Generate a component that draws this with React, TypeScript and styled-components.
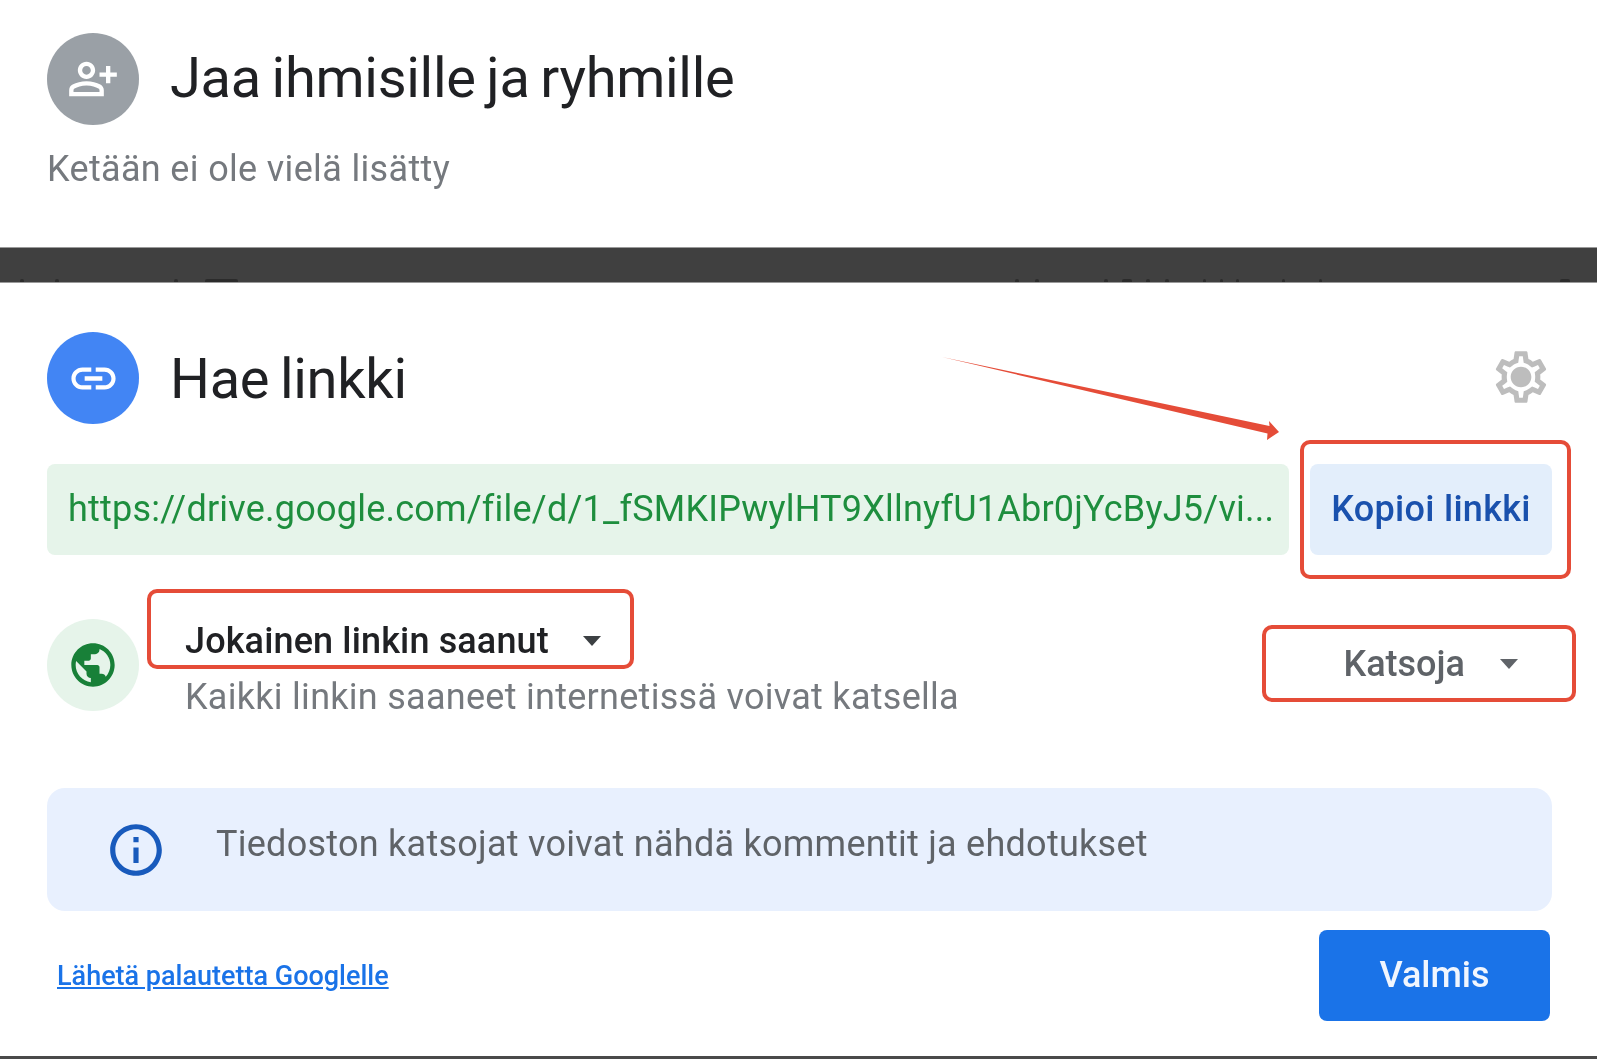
import { ReactElement, ReactNode } from 'react'
import styled, { createGlobalStyle } from 'styled-components'
import { MdInfoOutline, MdLink, MdOutlinePersonAddAlt, MdOutlineSettings, MdPublic } from 'react-icons/md'

const GlobalStyle = createGlobalStyle`
  html, body {
    margin: 0;
    padding: 0;
    background: #fff;
  }
  body {
    font-family: Roboto, "Liberation Sans", sans-serif;
  }
`

// bits of the page behind the dialog that peek over the band: gap from the previous one, width
const bandMarks = [
  [20, 4], [31, 4], [115, 4], [27, 33],
  [777, 4], [16, 4], [65, 4], [14, 10], [14, 4], [15, 4], [34, 3], [14, 3], [13, 3], [43, 3], [34, 3], [238, 10],
]

function Caret({ color }: { color: string }): ReactElement {
  return (
    <CaretIcon viewBox="0 0 18 10" aria-hidden="true">
      <polygon points="0,0 18,0 9,10" fill={color} />
    </CaretIcon>
  )
}

function CircleIcon({ bg, children }: { bg: string; children: ReactNode }): ReactElement {
  return <Circle $bg={bg}>{children}</Circle>
}

function App(): ReactElement {
  return (
    <Page>
      <GlobalStyle />

      <TopSection>
        <HeaderRow>
          <CircleIcon bg="#9aa0a6">
            <MdOutlinePersonAddAlt size={52} color="#fff" />
          </CircleIcon>
          <Title $shift={-1}>Jaa ihmisille ja ryhmille</Title>
        </HeaderRow>
        <EmptyNote>Ketään ei ole vielä lisätty</EmptyNote>
      </TopSection>

      <Band>
        {bandMarks.map(([left, width], i) => (
          <BandMark key={i} $left={left} $width={width} />
        ))}
      </Band>

      <Card>
        <HeaderRow>
          <CircleIcon bg="#4285f4">
            <MdLink size={53} color="#fff" />
          </CircleIcon>
          <Title $shift={1}>Hae linkki</Title>
          <SettingsButton>
            <MdOutlineSettings size={62} color="#bdbdbd" />
            <SettingsDot />
          </SettingsButton>
        </HeaderRow>

        <LinkRow>
          <UrlField>https://drive.google.com/file/d/1_fSMKIPwylHT9XllnyfU1Abr0jYcByJ5/vi...</UrlField>
          <CopyButton>
            Kopioi linkki
            <Callout $top={-24} $right={-19} $bottom={-24} $left={-10} />
          </CopyButton>
        </LinkRow>

        <AccessRow>
          <CircleIcon bg="#e6f4ea">
            <MdPublic size={52} color="#188038" />
          </CircleIcon>
          <AccessText>
            <AccessSelect>
              Jokainen linkin saanut
              <Caret color="#3c4043" />
              <Callout $top={-32} $right={-33} $bottom={-8} $left={-38} />
            </AccessSelect>
            <AccessNote>Kaikki linkin saaneet internetissä voivat katsella</AccessNote>
          </AccessText>
          <RoleSelect>
            Katsoja
            <Caret color="#5f6368" />
            <Callout $top={-19} $right={-58} $bottom={-18} $left={-81} />
          </RoleSelect>
        </AccessRow>

        <InfoBox>
          <MdInfoOutline size={62} color="#185abc" />
          <InfoText>Tiedoston katsojat voivat nähdä kommentit ja ehdotukset</InfoText>
        </InfoBox>

        <Footer>
          <FeedbackLink href="#">Lähetä palautetta Googlelle</FeedbackLink>
          <DoneButton>Valmis</DoneButton>
        </Footer>
      </Card>

      <ArrowOverlay viewBox="940 355 342 90" aria-hidden="true">
        <polygon
          points="942,357 1269.5,426 1269,421 1279,432 1267,440 1267.5,433.5"
          fill="#e54c38"
        />
      </ArrowOverlay>
    </Page>
  )
}

export default App

const Page = styled.div`
  position: relative;
  display: flex;
  flex-direction: column;
  width: 1597px;
  height: 1059px;
  overflow: hidden;
  background: #fff;
  filter: blur(0.5px);
`

const TopSection = styled.section`
  height: 247px;
  box-sizing: border-box;
  padding: 33px 0 0 47px;
`

const HeaderRow = styled.div`
  display: flex;
  align-items: center;
  height: 92px;
  gap: 31px;
`

const Circle = styled.div<{ $bg: string }>`
  display: flex;
  align-items: center;
  justify-content: center;
  flex: none;
  width: 92px;
  height: 92px;
  border-radius: 50%;
  background: ${(p) => p.$bg};
`

const Title = styled.h2<{ $shift: number }>`
  margin: ${(p) => p.$shift * 2}px 0 0;
  font-size: 56px;
  font-weight: 400;
  line-height: 64px;
  letter-spacing: -0.28px;
  word-spacing: -3px;
  color: #202124;
`

const EmptyNote = styled.p`
  margin: 23px 0 0 0;
  font-size: 36px;
  line-height: 42px;
  letter-spacing: 0.34px;
  color: #75797e;
`

const Band = styled.div`
  display: flex;
  align-items: flex-end;
  flex: none;
  height: 36px;
  box-sizing: border-box;
  background: #404040;
  border-top: 1px solid #9a9a9a;
  border-bottom: 1px solid #9a9a9a;
`

const BandMark = styled.span<{ $left: number; $width: number }>`
  height: 3px;
  margin-left: ${(p) => p.$left}px;
  width: ${(p) => p.$width}px;
  border-radius: 2px 2px 0 0;
  background: #2b2b2b;
`

const Card = styled.section`
  flex: 1;
  box-sizing: border-box;
  padding: 49px 45px 0 47px;
  border-bottom: 3px solid #4a4a4a;
`

const SettingsButton = styled.div`
  position: relative;
  display: flex;
  margin: -2px 0 0 auto;
`

const SettingsDot = styled.span`
  position: absolute;
  top: 22px;
  left: 22px;
  width: 18px;
  height: 18px;
  border-radius: 50%;
  background: #bdbdbd;
`

const LinkRow = styled.div`
  display: flex;
  gap: 21px;
  margin-top: 40px;
  height: 91px;
`

const UrlField = styled.div`
  flex: 1;
  display: flex;
  align-items: center;
  padding: 0 0 2px 21px;
  border-radius: 8px;
  background: #e6f4ea;
  font-size: 36px;
  letter-spacing: 0.22px;
  color: #1e8e3e;
  white-space: nowrap;
  overflow: hidden;
`

const CopyButton = styled.div`
  position: relative;
  display: flex;
  align-items: center;
  justify-content: center;
  flex: none;
  width: 242px;
  padding-bottom: 2px;
  box-sizing: border-box;
  border-radius: 8px;
  background: #e3eefb;
  font-size: 36px;
  font-weight: 500;
  letter-spacing: 0.3px;
  color: #1a51ad;
`

const Callout = styled.span<{ $top: number; $right: number; $bottom: number; $left: number }>`
  position: absolute;
  top: ${(p) => p.$top}px;
  right: ${(p) => p.$right}px;
  bottom: ${(p) => p.$bottom}px;
  left: ${(p) => p.$left}px;
  border: 4px solid #e54c38;
  border-radius: 10px;
`

const AccessRow = styled.div`
  display: flex;
  align-items: center;
  height: 91px;
  margin-top: 64px;
`

const AccessText = styled.div`
  display: flex;
  flex-direction: column;
  align-items: flex-start;
  margin: 8px 0 0 46px;
`

const AccessSelect = styled.div`
  position: relative;
  display: flex;
  align-items: center;
  gap: 34px;
  font-size: 36px;
  font-weight: 500;
  line-height: 40px;
  letter-spacing: 0.14px;
  color: #202124;
`

const CaretIcon = styled.svg`
  width: 18px;
  height: 10px;
  flex: none;
`

const AccessNote = styled.div`
  margin-top: 16px;
  font-size: 36px;
  line-height: 40px;
  letter-spacing: 0.28px;
  color: #75797e;
`

const RoleSelect = styled.div`
  position: relative;
  display: flex;
  align-items: center;
  gap: 35px;
  margin: -1px 34px 0 auto;
  font-size: 36px;
  font-weight: 500;
  line-height: 40px;
  color: #5f6368;
`

const InfoBox = styled.div`
  display: flex;
  align-items: center;
  gap: 49px;
  height: 123px;
  margin-top: 78px;
  padding-left: 58px;
  border-radius: 18px;
  background: #e8f0fe;
`

const InfoText = styled.div`
  margin-top: -12px;
  font-size: 36px;
  line-height: 40px;
  letter-spacing: 0.26px;
  color: #5f6368;
`

const Footer = styled.div`
  display: flex;
  align-items: center;
  justify-content: space-between;
  margin-top: 19px;
`

const FeedbackLink = styled.a`
  margin-left: 10px;
  font-size: 27px;
  font-weight: 500;
  color: #1a73e8;
`

const DoneButton = styled.div`
  display: flex;
  align-items: center;
  justify-content: center;
  width: 231px;
  height: 91px;
  margin-right: 2px;
  padding-bottom: 2px;
  box-sizing: border-box;
  border-radius: 8px;
  background: #1a73e8;
  font-size: 36px;
  font-weight: 500;
  color: #f1f6fe;
`

const ArrowOverlay = styled.svg`
  position: absolute;
  left: 940px;
  top: 355px;
  width: 342px;
  height: 90px;
`
